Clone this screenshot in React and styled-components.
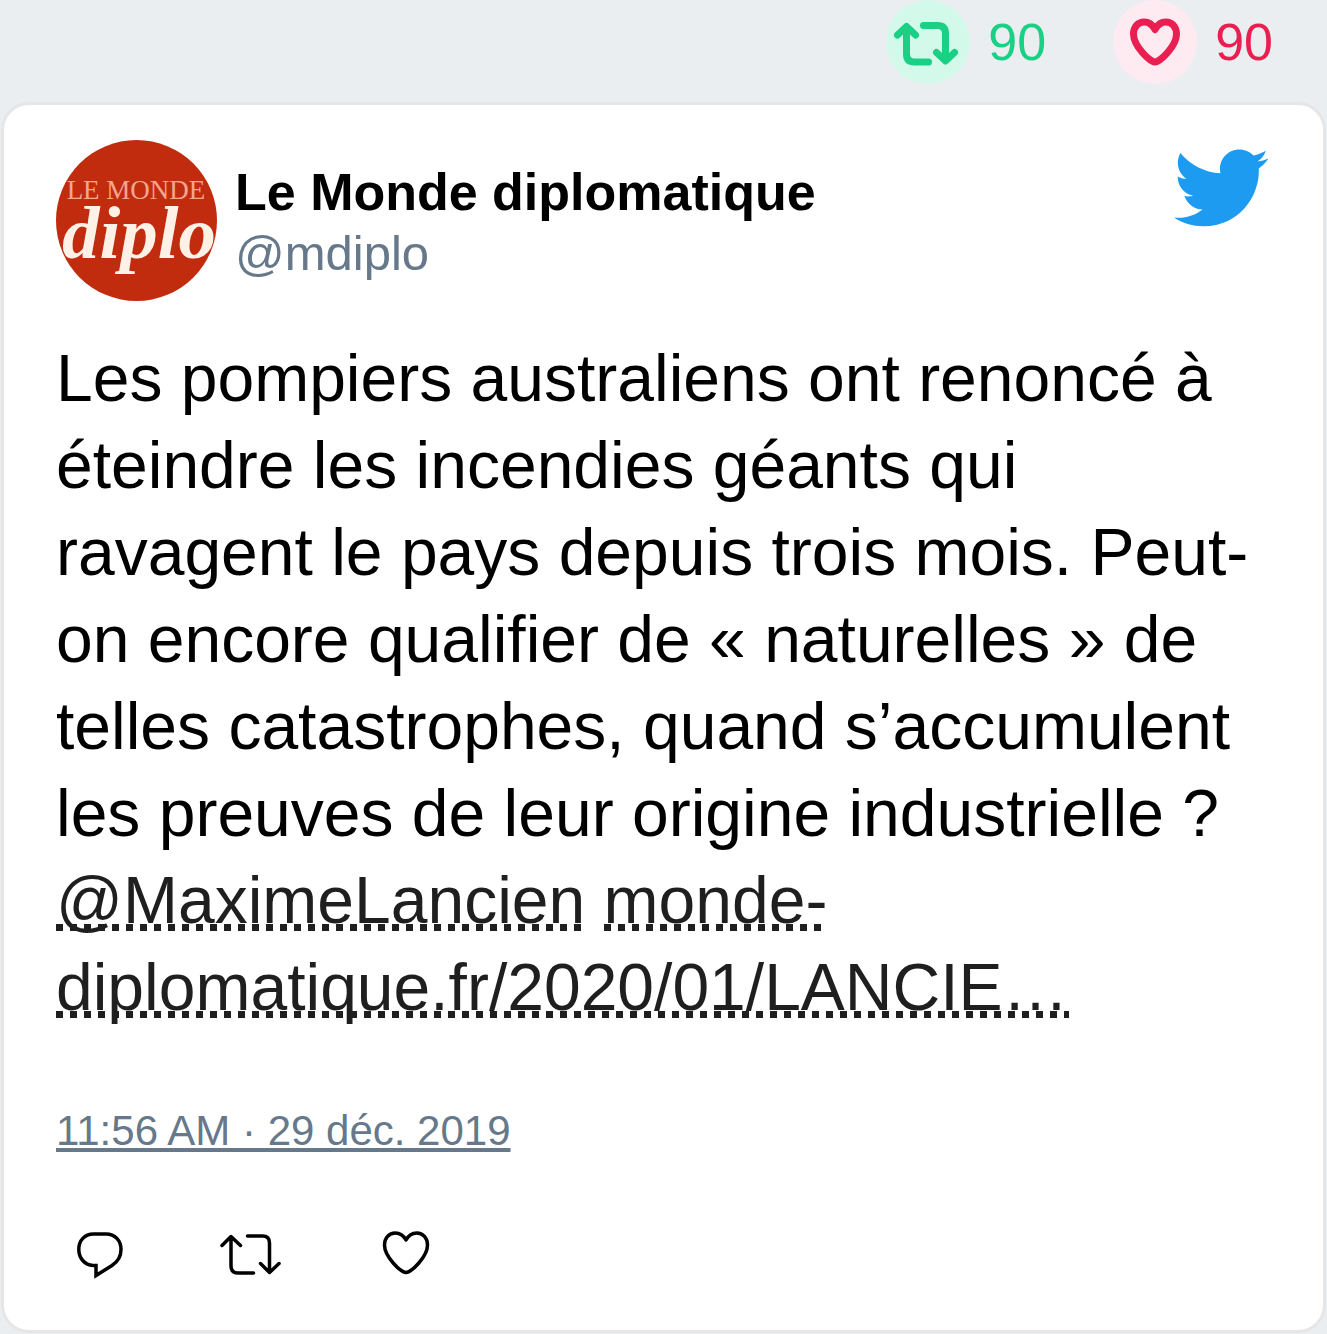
import React from "react";
import styled, { createGlobalStyle } from "styled-components";

const GlobalStyle = createGlobalStyle`
  *, *::before, *::after { box-sizing: border-box; }
  body {
    margin: 0;
    background: #eaeef1;
    color: #000;
    font-family: "Liberation Sans", Arial, sans-serif;
  }
`;

const Page = styled.main`
  display: flex;
  flex-direction: column;
  gap: 18px;
  padding: 0 1px 1px;
`;

const Stats = styled.div`
  display: flex;
  justify-content: flex-end;
  gap: 67px;
  padding-right: 53px;
`;

const Stat = styled.span`
  display: flex;
  align-items: center;
  gap: 18px;
  color: ${(p) => p.$color};
  font-size: 52px;
  line-height: 84px;
`;

const Badge = styled.span`
  display: flex;
  width: 84px;
  height: 84px;
  border-radius: 50%;
  background: ${(p) => p.$tint};
`;

const StrokeIcon = styled.svg`
  display: block;
  width: ${(p) => p.$size}px;
  height: ${(p) => p.$size}px;
  fill: none;
  stroke: currentColor;
  stroke-width: ${(p) => p.$weight};
  stroke-linecap: round;
  stroke-linejoin: ${(p) => p.$join || "round"};
`;

const Card = styled.article`
  padding: 35px 52px 32px;
  background: #fff;
  border: 3px solid #e6e6e6;
  border-radius: 28px;
`;

const Header = styled.header`
  display: flex;
  align-items: flex-start;
  gap: 18px;
`;

const Avatar = styled.svg`
  flex: none;
  width: 161px;
  height: 161px;
  border-radius: 50%;
  background: #c12c0f;
  font-family: "Liberation Serif", "Times New Roman", serif;
`;

const Author = styled.div`
  display: flex;
  flex: 1;
  flex-direction: column;
  padding-top: 22px;
  line-height: 61px;
`;

const Name = styled.strong`
  font-size: 52px;
  font-weight: 700;
`;

const Handle = styled.span`
  color: #66788a;
  font-size: 49px;
`;

const BirdLink = styled.a`
  flex: none;
  color: #1d9bf0;
`;

const Bird = styled.svg`
  display: block;
  width: 100px;
  height: 100px;
  fill: currentColor;
`;

const Message = styled.p`
  margin: 34px 0 72px;
  font-size: 66px;
  line-height: 87px;
`;

/* Square dots along the baseline, restarted on each line the link wraps to. */
const TextLink = styled.a`
  color: #1f1f1f;
  text-decoration: none;
  background: linear-gradient(90deg, currentColor 50%, transparent 50%) 0 61px / 14px 7px repeat-x;
  box-decoration-break: clone;
  -webkit-box-decoration-break: clone;
`;

const DateLink = styled.a`
  display: inline-block;
  color: #66788a;
  font-size: 42px;
  line-height: 56px;
  text-decoration: underline;
`;

const Actions = styled.div`
  display: flex;
  gap: 65px;
  margin-top: 51px;
`;

const Action = styled.button`
  width: 88px;
  height: 88px;
  padding: 0;
  border: 0;
  background: none;
  color: #000;
  cursor: pointer;
`;

export default function App() {
  return (
    <>
      <GlobalStyle />
      <Page>
        <Stats>
          <Stat $color="#1ad085">
            <Badge $tint="#d3f9ea">
              <StrokeIcon $size={84} $weight={7} viewBox="0 0 84 84" aria-hidden="true">
                <path d="M11.5 35 L20.5 26.5 L29.5 35 M20.5 27 V54 Q20.5 62 28.5 62 H42.5" />
                <path d="M37.5 25.5 H51.5 Q59.5 25.5 59.5 33.5 V60 M50.5 52.5 L59.5 61 L68.5 52.5" />
              </StrokeIcon>
            </Badge>
            90
          </Stat>
          <Stat $color="#ea1e50">
            <Badge $tint="#fdebf1">
              <StrokeIcon $size={84} $weight={7} viewBox="0 0 84 84" aria-hidden="true">
                <path d="M42 29.5 C39.5 24.5 36 22 31 22 C25 22 20.5 27 20.5 34 C20.5 46 37 62 42 62 C47 62 63.5 46 63.5 34 C63.5 27 59 22 53 22 C48 22 44.5 24.5 42 29.5 Z" />
              </StrokeIcon>
            </Badge>
            90
          </Stat>
        </Stats>

        <Card>
          <Header>
            <Avatar viewBox="0 0 161 161" role="img" aria-label="Le Monde diplomatique">
              <text x="80" y="59" textAnchor="middle" fontSize="27" fill="#f3a68c">LE MONDE</text>
              <text x="83" y="118" textAnchor="middle" fontSize="75" fontWeight="700" fontStyle="italic" fill="#fff1e6">diplo</text>
            </Avatar>
            <Author>
              <Name>Le Monde diplomatique</Name>
              <Handle>@mdiplo</Handle>
            </Author>
            <BirdLink href="#" aria-label="Twitter">
              <Bird viewBox="0.25 0.5 24 24" aria-hidden="true">
                <path d="M23.643 4.937c-.835.37-1.732.62-2.675.733.962-.576 1.7-1.49 2.048-2.578-.9.534-1.897.922-2.958 1.13-.85-.904-2.06-1.47-3.4-1.47-2.572 0-4.658 2.086-4.658 4.66 0 .364.042.718.12 1.06-3.873-.195-7.304-2.05-9.602-4.868-.4.69-.63 1.49-.63 2.342 0 1.616.823 3.043 2.072 3.878-.764-.025-1.482-.234-2.11-.583v.06c0 2.257 1.605 4.14 3.737 4.568-.392.106-.803.162-1.227.162-.3 0-.593-.028-.877-.082.593 1.85 2.313 3.198 4.352 3.234-1.595 1.25-3.604 1.995-5.786 1.995-.376 0-.747-.022-1.112-.065 2.062 1.323 4.51 2.093 7.14 2.093 8.57 0 13.255-7.098 13.255-13.254 0-.2-.005-.402-.014-.602.91-.658 1.7-1.477 2.323-2.41z" />
              </Bird>
            </BirdLink>
          </Header>

          <Message>
            Les pompiers australiens ont renoncé à éteindre les incendies géants
            qui ravagent le pays depuis trois mois. Peut-on encore qualifier de
            «&nbsp;naturelles&nbsp;» de telles catastrophes, quand s’accumulent
            les preuves de leur origine industrielle&nbsp;?{" "}
            <TextLink href="#">@MaximeLancien</TextLink>{" "}
            <TextLink href="#">monde-diplomatique.fr/2020/01/LANCIE…</TextLink>
          </Message>

          <DateLink href="#">
            <time dateTime="2019-12-29T11:56">11:56 AM · 29 déc. 2019</time>
          </DateLink>

          <Actions>
            <Action type="button" aria-label="Répondre">
              <StrokeIcon $size={88} $weight={3.5} $join="miter" viewBox="0 0 88 88" aria-hidden="true">
                <path d="M50 24 C59 24 65 30.5 65 39.5 C65 46 62 51.5 56 55.5 L40 65.5 V55.5 H37 C28.5 55 22.8 48 22.8 39.5 C22.8 30.5 28.5 24 37.5 24 Z" />
              </StrokeIcon>
            </Action>
            <Action type="button" aria-label="Retweeter">
              <StrokeIcon $size={88} $weight={3.5} viewBox="0 0 88 88" aria-hidden="true">
                <path d="M13 35.5 L22 26.5 L31.5 35.5 M22 27 V56 Q22 63 29 63 H44.5" />
                <path d="M38.5 26 H53.5 Q60.5 26 60.5 33 V62 M51.5 53.5 L60.5 62.5 L70 53.5" />
              </StrokeIcon>
            </Action>
            <Action type="button" aria-label="J’aime">
              <StrokeIcon $size={88} $weight={3.5} viewBox="0 0 88 88" aria-hidden="true">
                <path d="M44 30 C41.5 25.5 38 23 33.3 23 C27 23 22.5 28 22.5 35 C22.5 47 39 62.5 44 62.5 C49 62.5 65.5 47 65.5 35 C65.5 28 61 23 54.7 23 C50 23 46.5 25.5 44 30 Z" />
              </StrokeIcon>
            </Action>
          </Actions>
        </Card>
      </Page>
    </>
  );
}
